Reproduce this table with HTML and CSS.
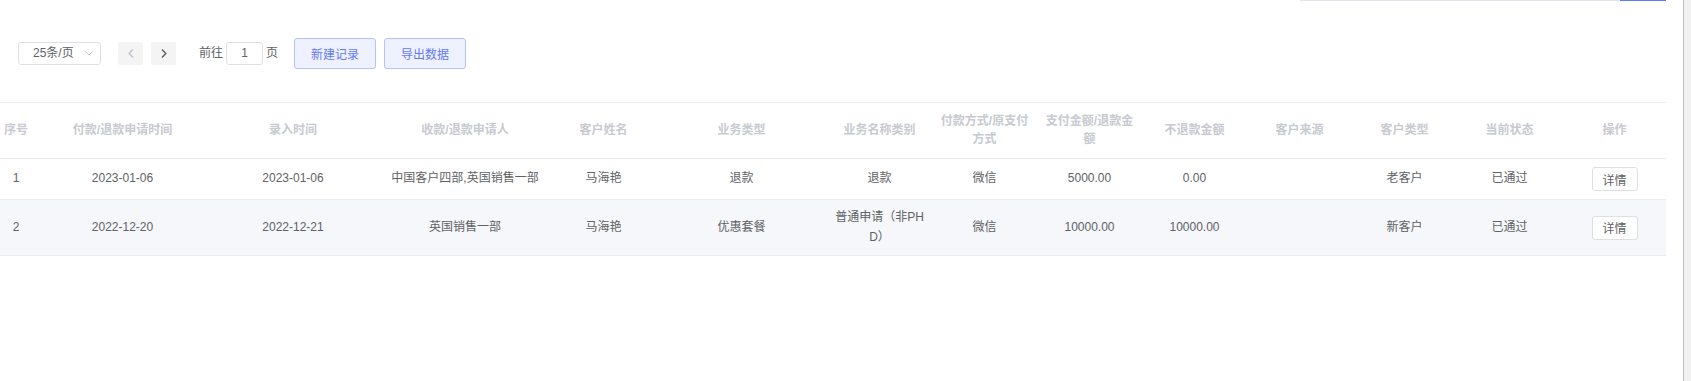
FILE: index.html
```html
<!DOCTYPE html>
<html lang="zh-CN">
<head>
<meta charset="utf-8">
<title>付款/退款记录</title>
<link rel="stylesheet" href="styles.css">
</head>
<body>
<div class="page">
  <div class="main">
    <div class="topbar">
      <span class="search-line"></span><span class="search-btn-line"></span>
    </div>
    <div class="toolbar">
      <div class="sizes">
        <span class="sizes-text">25条/页</span>
        <svg class="sizes-arrow" width="8" height="5" viewBox="0 0 8 5"><path d="M0.5 0.5 L4 4 L7.5 0.5" fill="none" stroke="#c0c4cc" stroke-width="1"/></svg>
      </div>
      <button class="pager-btn prev" type="button">
        <svg width="6" height="9" viewBox="0 0 6 9"><path d="M5 0.5 L1.2 4.5 L5 8.5" fill="none" stroke="#c0c4cc" stroke-width="1.5"/></svg>
      </button>
      <button class="pager-btn next" type="button">
        <svg width="6" height="9" viewBox="0 0 6 9"><path d="M1 0.5 L4.8 4.5 L1 8.5" fill="none" stroke="#606266" stroke-width="1.5"/></svg>
      </button>
      <span class="jump-label">前往</span>
      <span class="jump-input">1</span>
      <span class="jump-label after">页</span>
      <button class="plain-btn first" type="button">新建记录</button>
      <button class="plain-btn" type="button">导出数据</button>
    </div>
    <div class="table-wrap">
      <table class="grid">
        <colgroup>
          <col class="w44"><col class="w169"><col class="w172"><col class="w172"><col class="w105"><col class="w171">
          <col class="w105"><col class="w105"><col class="w105"><col class="w105"><col class="w105"><col class="w105"><col class="w105"><col class="w105">
        </colgroup>
        <thead>
          <tr>
            <th>序号</th>
            <th>付款/退款申请时间</th>
            <th>录入时间</th>
            <th>收款/退款申请人</th>
            <th>客户姓名</th>
            <th>业务类型</th>
            <th>业务名称类别</th>
            <th>付款方式/原支付方式</th>
            <th>支付金额/退款金额</th>
            <th>不退款金额</th>
            <th>客户来源</th>
            <th>客户类型</th>
            <th>当前状态</th>
            <th>操作</th>
          </tr>
        </thead>
        <tbody>
          <tr>
            <td>1</td>
            <td>2023-01-06</td>
            <td>2023-01-06</td>
            <td>中国客户四部,英国销售一部</td>
            <td>马海艳</td>
            <td>退款</td>
            <td>退款</td>
            <td>微信</td>
            <td>5000.00</td>
            <td>0.00</td>
            <td></td>
            <td>老客户</td>
            <td>已通过</td>
            <td><button class="detail-btn" type="button">详情</button></td>
          </tr>
          <tr class="striped">
            <td>2</td>
            <td>2022-12-20</td>
            <td>2022-12-21</td>
            <td>英国销售一部</td>
            <td>马海艳</td>
            <td>优惠套餐</td>
            <td>普通申请（非PHD）</td>
            <td>微信</td>
            <td>10000.00</td>
            <td>10000.00</td>
            <td></td>
            <td>新客户</td>
            <td>已通过</td>
            <td><button class="detail-btn" type="button">详情</button></td>
          </tr>
        </tbody>
      </table>
    </div>
  </div>
  <div class="scrollbar"></div>
</div>
</body>
</html>
```
FILE: styles.css
```css
html, body {
  margin: 0;
  padding: 0;
  background: #ffffff;
}
body {
  font-family: "Liberation Sans", "Noto Sans CJK SC", sans-serif;
  font-size: 12px;
  color: #606266;
}
.page {
  display: flex;
  width: 1691px;
  height: 381px;
  overflow: hidden;
}
.main {
  flex: 1;
  min-width: 0;
  background: #ffffff;
}
.scrollbar {
  width: 7px;
  border-left: 1px solid #c1c1c1;
  background: #f1f1f1;
}

/* top remnant of a search bar */
.topbar {
  display: flex;
  justify-content: flex-end;
  padding-right: 17px;
  height: 1px;
}
.search-line {
  width: 320px;
  height: 1px;
  background: #dfe4ec;
}
.search-btn-line {
  width: 46px;
  height: 1px;
  background: #5a7cfb;
}

/* toolbar */
.toolbar {
  display: flex;
  align-items: center;
  height: 31px;
  margin-top: 37px;
  padding-left: 18px;
}
.sizes {
  box-sizing: border-box;
  width: 83px;
  height: 23px;
  border: 1px solid #dcdfe6;
  border-radius: 3px;
  display: flex;
  align-items: center;
  padding-left: 14px;
  padding-right: 7px;
}
.sizes-text {
  color: #606266;
  line-height: 21px;
}
.sizes-arrow {
  margin-left: auto;
  display: block;
}
.pager-btn {
  box-sizing: border-box;
  width: 25px;
  height: 23px;
  border: none;
  border-radius: 2px;
  background: #f4f4f5;
  padding: 0;
  display: flex;
  align-items: center;
  justify-content: center;
}
.pager-btn svg {
  display: block;
}
.pager-btn.prev {
  margin-left: 17px;
}
.pager-btn.next {
  margin-left: 8px;
}
.jump-label {
  margin-left: 23px;
  color: #606266;
  line-height: 23px;
}
.jump-label.after {
  margin-left: 3px;
}
.jump-input {
  box-sizing: border-box;
  width: 37px;
  height: 23px;
  margin-left: 3px;
  border: 1px solid #dcdfe6;
  border-radius: 3px;
  text-align: center;
  line-height: 21px;
  color: #606266;
}
.plain-btn {
  box-sizing: border-box;
  width: 82px;
  height: 31px;
  margin-left: 8px;
  border: 1px solid #b6c2fd;
  border-radius: 3px;
  background: #eef1ff;
  color: #6479f5;
  font-family: "Liberation Sans", "Noto Sans CJK SC", sans-serif;
  font-size: 12px;
  padding: 0;
}
.plain-btn.first {
  margin-left: 16px;
}

/* table */
.table-wrap {
  margin-top: 33px;
  margin-right: 17px;
  overflow: hidden;
}
.grid {
  table-layout: fixed;
  width: 1673px;
  margin-left: -6px;
  border-collapse: separate;
  border-spacing: 0;
}
.w44 { width: 44px; }
.w169 { width: 169px; }
.w171 { width: 171px; }
.w172 { width: 172px; }
.w105 { width: 105px; }

.grid th {
  border-top: 1px solid #ebeef5;
  border-bottom: 1px solid #e6e9f0;
  padding: 9px 6px 10px;
  line-height: 18px;
  font-weight: 700;
  color: #c7cad0;
  text-align: center;
  vertical-align: middle;
  word-break: break-all;
}
.grid td {
  border-bottom: 1px solid #e9ecf2;
  padding: 8px 6px;
  line-height: 19.5px;
  text-align: center;
  vertical-align: middle;
  word-break: break-all;
  color: #606266;
}
.grid tr.striped td {
  background: #f5f7fa;
}
.detail-btn {
  box-sizing: border-box;
  width: 46px;
  height: 24px;
  border: 1px solid #dcdfe6;
  border-radius: 3px;
  background: #ffffff;
  color: #606266;
  font-family: "Liberation Sans", "Noto Sans CJK SC", sans-serif;
  font-size: 12px;
  padding: 0;
  vertical-align: middle;
}
```
